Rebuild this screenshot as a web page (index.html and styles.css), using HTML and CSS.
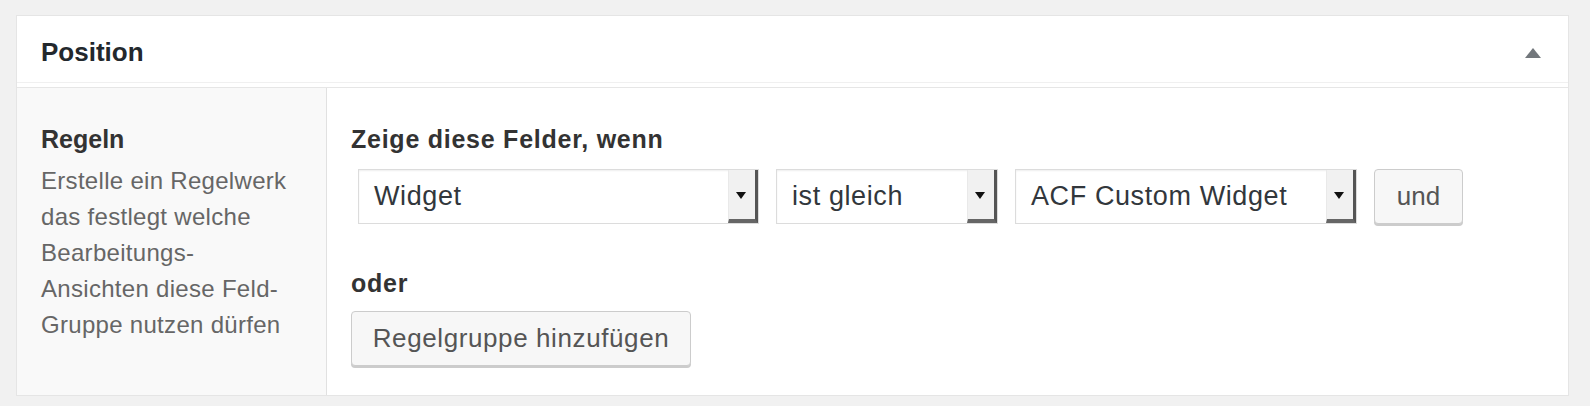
FILE: index.html
```html
<!DOCTYPE html>
<html lang="de">
<head>
    <meta charset="UTF-8">
    <meta name="viewport" content="width=device-width, initial-scale=1.0">
    <title>Position</title>
    <link rel="stylesheet" href="styles.css">
</head>
<body>
    <div class="postbox">
        <div class="postbox-header">
            <h2 class="hndle">Position</h2>
            <span class="toggle">
                <svg width="16" height="10" viewBox="0 0 16 10"><polygon points="0,10 8,0 16,10" fill="#72777c"/></svg>
            </span>
        </div>
        <div class="inside">
            <div class="field">
                <div class="field-label">
                    <label>Regeln</label>
                    <p class="description">Erstelle ein Regelwerk das festlegt welche Bearbeitungs-Ansichten diese Feld-Gruppe nutzen dürfen</p>
                </div>
                <div class="field-input">
                    <h4 class="rule-title">Zeige diese Felder, wenn</h4>
                    <div class="rule-row">
                        <div class="select select-param"><span class="select-value">Widget</span><span class="select-arrow"></span></div>
                        <div class="select select-operator"><span class="select-value">ist gleich</span><span class="select-arrow"></span></div>
                        <div class="select select-value-field"><span class="select-value">ACF Custom Widget</span><span class="select-arrow"></span></div>
                        <button class="button button-and">und</button>
                    </div>
                    <h4 class="rule-title rule-or">oder</h4>
                    <button class="button button-add">Regelgruppe hinzufügen</button>
                </div>
            </div>
        </div>
    </div>
</body>
</html>
```

FILE: styles.css
```css
body {
    margin: 15px 21px 0 16px;
    background-color: #f1f1f1;
    font-family: "Liberation Sans", Arial, sans-serif;
    color: #32373c;
}
.postbox {
    background-color: #fff;
    border: 1px solid #e5e5e5;
    box-shadow: 0 1px 1px rgba(0, 0, 0, 0.04);
}
.postbox-header {
    display: flex;
    align-items: center;
    justify-content: space-between;
    padding: 18px 27px 12px 24px;
    border-bottom: 1px solid #f0f0f0;
}
.hndle {
    margin: 0;
    font-size: 26px;
    line-height: 36px;
    font-weight: bold;
    color: #23282d;
}
.toggle {
    display: flex;
    margin-top: 2px;
}
.inside {
    margin-top: 4px;
}
.field {
    display: flex;
    border-top: 1px solid #e6e6e6;
}
.field-label {
    box-sizing: border-box;
    width: 310px;
    padding: 34px 30px 0 24px;
    background-color: #f9f9f9;
    border-right: 1px solid #e1e1e1;
}
.field-label label {
    display: block;
    font-size: 25px;
    line-height: 34px;
    font-weight: bold;
    color: #333;
}
.description {
    margin: 7px 0 0 0;
    max-width: 250px;
    font-size: 24px;
    line-height: 36px;
    letter-spacing: 0.3px;
    color: #666;
}
.field-input {
    flex: 1;
    padding: 34px 24px 29px 24px;
}
.rule-title {
    margin: 0 0 13px 0;
    font-size: 25px;
    line-height: 34px;
    font-weight: bold;
    letter-spacing: 0.75px;
    color: #333;
}
.rule-or {
    margin: 42px 0 11px 0;
}
.rule-row {
    display: flex;
    gap: 17px;
    padding-left: 7px;
}
.select {
    box-sizing: border-box;
    display: flex;
    align-items: center;
    height: 55px;
    padding-left: 15px;
    background-color: #fff;
    border: 1px solid #dcdcdc;
    box-shadow: inset 0 1px 2px rgba(0, 0, 0, 0.07);
    font-size: 27px;
    letter-spacing: 0.6px;
    color: #32373c;
}
.select-param {
    width: 401px;
}
.select-operator {
    width: 222px;
}
.select-value-field {
    width: 342px;
}
.select-value {
    flex: 1;
    white-space: nowrap;
}
.select-arrow {
    box-sizing: border-box;
    position: relative;
    align-self: stretch;
    width: 30px;
    background-color: #f1f1f1;
    border-left: 1px solid #e9e9e9;
    border-right: 3px solid #555;
    border-bottom: 4px solid #666;
}
.select-arrow::after {
    content: "";
    position: absolute;
    left: 7px;
    top: 22px;
    border-left: 5px solid transparent;
    border-right: 5px solid transparent;
    border-top: 7px solid #111;
}
.button {
    box-sizing: border-box;
    height: 55px;
    padding: 0 22px;
    background-color: #f7f7f7;
    border: 1px solid #cccccc;
    border-radius: 4px;
    box-shadow: 0 2px 0 #cccccc;
    font-family: inherit;
    font-size: 26px;
    color: #555;
    cursor: pointer;
}
.button-and {
    width: 89px;
    padding: 0;
}
.button-add {
    width: 340px;
    padding: 0;
    letter-spacing: 0.6px;
}
```
